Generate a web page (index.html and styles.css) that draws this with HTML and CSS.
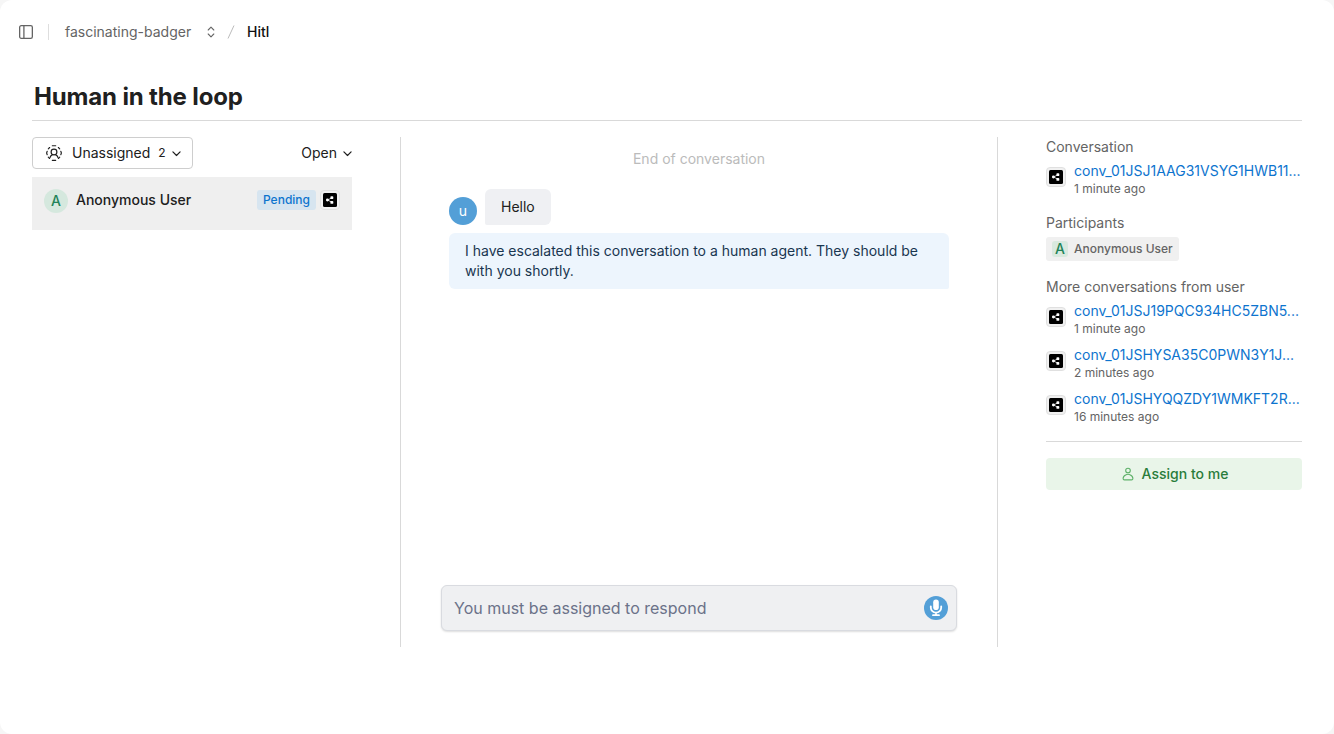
FILE: index.html
```html
<!DOCTYPE html>
<html lang="en">
<head>
<meta charset="utf-8">
<title>Human in the loop</title>
<link rel="stylesheet" href="styles.css">
</head>
<body>
<svg class="defs" width="0" height="0" aria-hidden="true">
  <symbol id="share" viewBox="0 0 14 14">
    <rect width="14" height="14" rx="1.5" fill="#000"/>
    <path d="M9 4.700 4.700 7 9 9.300" fill="none" stroke="#fff" stroke-width=".7"/>
    <circle cx="4.400" cy="7" r="1.450" fill="#fff"/>
    <rect x="7.400" y="3.200" width="2.900" height="2.900" rx=".9" fill="#fff"/>
    <rect x="7.400" y="7.900" width="2.900" height="2.900" rx=".9" fill="#fff"/>
  </symbol>
  <symbol id="chevron" viewBox="0 0 10 6">
    <path d="M1 1l4 4 4-4" fill="none" stroke="#202020" stroke-width="1.35" stroke-linecap="round" stroke-linejoin="round"/>
  </symbol>
</svg>
<div class="page">
  <header class="topbar">
    <svg class="panel-icon" width="14" height="14" viewBox="0 0 14 14" fill="none" stroke="#646464" stroke-width="1.3"><rect x=".65" y=".65" width="12.7" height="12.7" rx="1.6"/><path d="M4.9.6v12.8"/></svg>
    <span class="divider"></span>
    <span class="workspace">fascinating-badger</span>
    <svg class="sort-icon" width="8" height="12" viewBox="0 0 8 12" fill="none" stroke="#666" stroke-width="1.1" stroke-linecap="round" stroke-linejoin="round"><path d="M1.2 4 4 1.2 6.800 4M1.200 8 4 10.800 6.800 8"/></svg>
    <svg class="slash" width="8" height="14" viewBox="0 0 8 14" fill="none" stroke="#bbb"><path d="M7 .5 1 13.500"/></svg>
    <span class="current">Hitl</span>
  </header>
  <main class="main">
    <h1 class="title">Human in the loop</h1>
    <div class="columns">
      <section class="inbox">
        <div class="filters">
          <button class="select">
            <svg width="16" height="16" viewBox="0 0 16 16" fill="none" stroke="#202020" stroke-width="1.15" stroke-linecap="round"><path d="M6.300.7h3.400M6.300 15.300h3.400M2.300 3.800l1.300-1.300M13.700 3.800l-1.300-1.300M2.300 12.200l1.300 1.300M13.700 12.200l-1.300 1.300M1.200 6.300.6 8l.6 1.700M14.800 6.300l.6 1.700-.6 1.700"/><circle cx="8" cy="7" r="2.900"/><path d="M4 12.500c.5-1.800 1.500-2.500 2.500-2.900M12 12.500c-.5-1.800-1.500-2.500-2.500-2.900"/></svg>
            <span class="select-label">Unassigned</span><span class="count">2</span>
            <svg class="chev" width="9" height="5.400"><use href="#chevron"/></svg>
          </button>
          <button class="status">Open <svg class="chev" width="9" height="5.400"><use href="#chevron"/></svg></button>
        </div>
        <div class="row">
          <span class="avatar">A</span>
          <span class="name">Anonymous User</span>
          <span class="badge">Pending</span>
          <span class="channel"><svg width="14" height="14"><use href="#share"/></svg></span>
        </div>
      </section>
      <section class="chat">
        <p class="end">End of conversation</p>
        <div class="incoming"><span class="user-avatar">u</span><div class="bubble">Hello</div></div>
        <div class="notice">I have escalated this conversation to a human agent. They should be with you shortly.</div>
        <div class="composer">
          <span>You must be assigned to respond</span>
          <svg width="24" height="24" viewBox="0 0 24 24"><circle cx="12" cy="12" r="12" fill="#539fd7"/><rect x="9.200" y="3.500" width="5.600" height="10.500" rx="2.800" fill="#fff"/><path d="M6.800 10.300v1.200a5.200 5.200 0 0 0 10.400 0v-1.200M12 16.800v2.400M9 19.200h6" fill="none" stroke="#fff" stroke-width="1.800" stroke-linecap="round"/></svg>
        </div>
      </section>
      <aside class="details">
        <h2 class="heading">Conversation</h2>
        <div class="conv"><span class="channel"><svg width="14" height="14"><use href="#share"/></svg></span><div class="conv-text"><a class="link">conv_01JSJ1AAG31VSYG1HWB11...</a><span class="time">1 minute ago</span></div></div>
        <h2 class="heading people">Participants</h2>
        <div class="chip"><span class="chip-avatar">A</span>Anonymous User</div>
        <h2 class="heading more">More conversations from user</h2>
        <div class="conv"><span class="channel"><svg width="14" height="14"><use href="#share"/></svg></span><div class="conv-text"><a class="link">conv_01JSJ19PQC934HC5ZBN5...</a><span class="time">1 minute ago</span></div></div>
        <div class="conv next"><span class="channel"><svg width="14" height="14"><use href="#share"/></svg></span><div class="conv-text"><a class="link">conv_01JSHYSA35C0PWN3Y1J...</a><span class="time">2 minutes ago</span></div></div>
        <div class="conv next"><span class="channel"><svg width="14" height="14"><use href="#share"/></svg></span><div class="conv-text"><a class="link">conv_01JSHYQQZDY1WMKFT2R...</a><span class="time">16 minutes ago</span></div></div>
        <hr class="rule">
        <button class="assign"><svg width="12" height="14" viewBox="0 0 12 14" fill="none" stroke="#5fb16a" stroke-width="1.100"><circle cx="6" cy="3.500" r="2.300"/><path d="M4 7.800c.7-.4 1.200-.5 2-.5s1.300.1 2 .5c1.700.8 2.900 2.300 2.900 3.700 0 .9-.5 1.400-1.300 1.400H2.400c-.8 0-1.300-.5-1.300-1.400 0-1.400 1.200-2.900 2.900-3.700z"/></svg>Assign to me</button>
      </aside>
    </div>
  </main>
</div>
</body>
</html>
```
FILE: styles.css
```css
* { box-sizing: border-box; }
html { background: #f6f6f6; }
body { margin: 0; font: 14px/20px Inter, sans-serif; color: #202020; }
h1, h2, p { margin: 0; }
button { font: inherit; color: inherit; background: none; border: 0; padding: 0; }
svg { flex: none; display: block; }
.defs { position: absolute; }
.page { height: 734px; background: #fff; border-radius: 12px; }
.topbar { height: 64px; padding-left: 19px; display: flex; align-items: center; }
.divider { width: 1px; height: 16px; background: #dedede; margin: 0 16px 0 15px; }
.workspace { width: 126px; color: #646464; white-space: nowrap; }
.sort-icon { margin-left: 16px; }
.slash { margin: 0 12px; }
.current { color: #111; font-weight: 500; }
.main { padding: 16px 32px 0; }
.title { height: 41px; padding-left: 2px; border-bottom: 1px solid #d9d9d9; font-size: 24px; line-height: 34px; font-weight: 700; letter-spacing: -.15px; }
.columns { display: grid; grid-template-columns: 320px 598px 256px; column-gap: 48px; margin-top: 16px; height: 510px; }
.filters { display: flex; justify-content: space-between; align-items: center; height: 32px; }
.select { display: flex; align-items: center; width: 161px; height: 32px; border: 1px solid #cecece; border-radius: 4px; padding-left: 13px; }
.select-label { margin-left: 10px; }
.count { font-size: 12px; margin-left: 8px; }
.select .chev { margin-left: 6px; }
.chev { margin-top: 2px; }
.status { display: flex; align-items: center; gap: 6px; }
.row { display: flex; align-items: flex-start; height: 53px; margin-top: 8px; padding: 12px; background: #efefef; }
.avatar { width: 24px; height: 24px; border-radius: 50%; background: #d5e8de; color: #218358; text-align: center; font-weight: 500; line-height: 24px; }
.name { margin: 1px auto 0 8px; font-weight: 500; }
.badge { height: 20px; margin: 1px 4px 0 0; padding: 0 6px; border-radius: 3px; background: #d7e5f0; color: #0d74ce; font-size: 12px; font-weight: 500; line-height: 20px; }
.row .channel { margin-top: 1px; }
.channel { display: flex; align-items: center; justify-content: center; flex: none; width: 20px; height: 20px; border: 1px solid #e0e0e0; border-radius: 4px; background: #f0f0f0; }
.chat { display: flex; flex-direction: column; margin: 0; border: solid #d9d9d9; border-width: 0 1px; padding: 12px 40px 16px; }
.end { text-align: center; color: #bbb; }
.incoming { display: flex; align-items: flex-end; gap: 8px; margin: 20px 0 8px 8px; }
.user-avatar { width: 28px; height: 28px; border-radius: 50%; background: #539fd7; color: #fff; text-align: center; line-height: 28px; }
.bubble { height: 36px; padding: 8px 16px; border-radius: 6px 6px 6px 2px; background: #eff0f3; }
.notice { width: 500px; height: 56px; margin-left: 8px; padding: 8px 16px; border-radius: 6px 6px 2px 6px; background: #edf5fd; color: #193650; }
.composer { display: flex; align-items: center; justify-content: space-between; height: 46px; margin-top: auto; padding: 0 8px 0 12px; border: 1px solid #d9dbe0; border-radius: 6px; background: #eff0f2; box-shadow: 0 1px 2px #0002; color: #6b7289; font-size: 16px; }
.heading { font-size: 14px; line-height: 20px; font-weight: 400; color: #646464; }
.conv { display: flex; align-items: flex-start; gap: 8px; height: 36px; margin-top: 4px; }
.conv .channel { margin-top: 6px; }
.conv.next { margin-top: 8px; }
.conv-text { display: flex; flex-direction: column; }
.link { color: #0d74ce; white-space: nowrap; }
.time { font-size: 12px; line-height: 16px; color: #646464; }
.people { margin-top: 16px; }
.chip { display: flex; align-items: center; gap: 6px; width: 133px; height: 24px; margin-top: 4px; padding-left: 6px; border-radius: 3px; background: #f0f0f0; color: #646464; font-size: 12px; font-weight: 500; white-space: nowrap; }
.chip-avatar { width: 16px; height: 16px; border-radius: 3px; background: #d9e9df; color: #218358; text-align: center; line-height: 16px; font-size: 14px; font-weight: 500; }
.more { margin-top: 16px; }
.rule { height: 1px; border: 0; margin: 16px 0 16px; background: #d9d9d9; }
.assign { display: flex; align-items: center; justify-content: center; gap: 8px; padding-left: 2px; width: 256px; height: 32px; border-radius: 4px; background: #e9f5e9; color: #297c3b; font-weight: 500; }
```
